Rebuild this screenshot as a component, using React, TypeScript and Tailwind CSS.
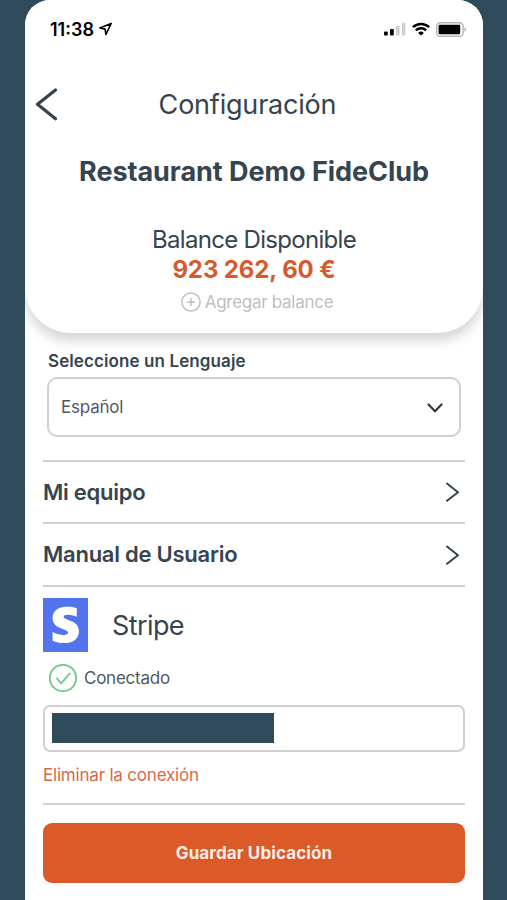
import React from 'react';

function StatusBar() {
  return (
    <div className="flex items-center justify-between h-[30px] pl-[25px] pr-[17px] text-black">
      <div className="flex items-center gap-[4px]">
        <span className="pt-px text-[18px] leading-none font-semibold">11:38</span>
        <svg width="15" height="14" viewBox="0 0 15 14" fill="none" stroke="currentColor" strokeWidth="1.6" strokeLinejoin="round">
          <path d="M13.2 1.4 1.8 6l5.3 1.1.8 5.4z" />
        </svg>
      </div>
      <div className="flex items-center">
        <svg width="22" height="14" viewBox="0 0 22 14">
          <rect x="0" y="9.5" width="3.8" height="4" rx="1" />
          <rect x="6" y="7" width="3.8" height="6.5" rx="1" />
          <rect x="12" y="3.8" width="3.6" height="9.7" rx="1" fill="#cfcfcf" />
          <rect x="17.8" y="0.7" width="3.6" height="12.8" rx="1" fill="#cfcfcf" />
        </svg>
        <svg className="ml-[6px]" width="18" height="14" viewBox="0 0 18 14" fill="none" stroke="currentColor" strokeWidth="2.5">
          <path d="M0.9 5.2a11.6 11.6 0 0 1 16.2 0" />
          <path d="M3.8 8.4a7.4 7.4 0 0 1 10.4 0" />
          <path d="M9 13.6 6.2 10.9a4 4 0 0 1 5.6 0z" fill="currentColor" stroke="none" />
        </svg>
        <svg className="ml-[6px]" width="30" height="15" viewBox="0 0 30 15">
          <rect x="0.7" y="0.7" width="26.4" height="13.6" rx="3.6" fill="none" stroke="#b4b4b4" strokeWidth="1.4" />
          <rect x="2.6" y="2.8" width="21.6" height="9.4" rx="1.2" />
          <path d="M28.6 5.4c1.5.6 1.5 3.8 0 4.4z" fill="#8d8d8d" />
        </svg>
      </div>
    </div>
  );
}

function Header() {
  return (
    <header className="flex flex-col h-[333px] pt-[14px] rounded-b-[46px] bg-white shadow-[0_8px_12px_rgba(0,0,0,0.16)] shrink-0">
      <StatusBar />
      <div className="grid grid-cols-[60px_1fr_60px] items-center h-[50px] mt-[36px]">
        <button className="pl-[10px]">
          <svg width="24" height="34" viewBox="0 0 24 34" fill="none" stroke="#36444f" strokeWidth="3.2" strokeLinecap="round" strokeLinejoin="round">
            <path d="M20.5 2 2.5 16.2 20.5 30.8" />
          </svg>
        </button>
        <h1 className="text-center text-[27px] tracking-[-0.2px] whitespace-nowrap -ml-[13px]">Configuración</h1>
      </div>
      <h2 className="mt-[22px] text-center text-[27px] leading-[40px] font-bold tracking-[-0.05px]">Restaurant Demo FideClub</h2>
      <p className="mt-[33px] text-center text-[24px] leading-[30px] tracking-[-0.7px]">Balance Disponible</p>
      <p className="mt-px text-center text-[24px] leading-[28px] font-bold tracking-[-0.1px] text-[#d55b2c]">923 262, 60 €</p>
      <button className="flex items-center justify-center gap-[4px] h-[24px] mt-[6px] pl-[6px] text-[#bfbfbf]">
        <svg width="20" height="20" viewBox="0 0 20 20" fill="none" stroke="currentColor" strokeWidth="1.5" strokeLinecap="round">
          <circle cx="10" cy="10" r="9.1" />
          <path d="M10 6.5v7M6.5 10h7" />
        </svg>
        <span className="pt-0.5 text-[17px] tracking-[-0.28px]">Agregar balance</span>
      </button>
    </header>
  );
}

function MenuRow({ label }: { label: string }) {
  return (
    <button className="flex items-center justify-between w-full h-[62.5px] pr-[5px] border-t-2 border-[#d0d0d0]">
      <span className="pt-px text-[22px] font-semibold tracking-[-0.25px]">{label}</span>
      <svg className="mt-px" width="15" height="20" viewBox="0 0 15 20" fill="none" stroke="#36444f" strokeWidth="2" strokeLinecap="round" strokeLinejoin="round">
        <path d="M2 1.5 13 10.2 2 18.8" />
      </svg>
    </button>
  );
}

export default function App() {
  return (
    <div className="h-[900px] pl-[25px] pr-[24px] bg-[#2f4a5b] overflow-hidden font-['Inter','Liberation_Sans',sans-serif] text-[#36444f]">
      <div className="flex flex-col h-full bg-white rounded-t-[25px] overflow-hidden">
        <Header />

        <main className="flex flex-col px-[18px] pt-[15px]">
          <div className="px-[4px]">
            <label className="block pl-px text-[17px] leading-[26px] font-semibold tracking-[0.1px]">Seleccione un Lenguaje</label>
            <div className="flex items-center justify-between h-[60px] mt-[3px] pt-px pl-[12px] pr-[16px] border-2 border-[#d0d0d0] rounded-[10px] text-[#50595f]">
              <span className="text-[17px] tracking-[-0.2px]">Español</span>
              <svg width="16" height="10" viewBox="0 0 16 10" fill="none" stroke="#303942" strokeWidth="2.2" strokeLinecap="round" strokeLinejoin="round">
                <path d="M1.5 1.5 8 8.3 14.5 1.5" />
              </svg>
            </div>
          </div>

          <div className="mt-[22.5px]">
            <MenuRow label="Mi equipo" />
            <MenuRow label="Manual de Usuario" />
          </div>

          <section className="border-t-2 border-[#d0d0d0] pt-[11.5px]">
            <div className="flex items-center gap-[24px]">
              <svg width="45" height="54" viewBox="0 0 45 54">
                <rect width="45" height="54" fill="#5474ef" />
                <path
                  d="M33.8 10.2v8.6c-3-1.3-6-2.1-9-2.1-2.6 0-4.2.7-4.2 2.1 0 1.6 2 2.2 5.4 3.4 6.6 2.3 9.9 5.2 9.9 11 0 7.6-5.5 11.9-14.5 11.9-4.4 0-8.6-.8-11.8-2.4v-8.8c3.6 1.9 7.6 3 11.2 3 2.8 0 4.3-.7 4.3-2.3s-1.7-2.4-5.6-3.7c-6.6-2.2-9.9-5.2-9.9-10.9 0-7 5.5-11.3 13.9-11.3 3.8 0 7.3.4 10.3 1.5z"
                  fill="#fff"
                />
              </svg>
              <span className="pt-0.5 text-[27px] tracking-[-0.6px]">Stripe</span>
            </div>
            <div className="flex items-center gap-[6px] h-[30px] mt-[11px] pl-[5px]">
              <svg width="30" height="30" viewBox="0 0 30 30" fill="none" stroke="#6cc985" strokeWidth="1.8" strokeLinecap="round" strokeLinejoin="round">
                <circle cx="15" cy="15" r="13.2" />
                <path d="m9 15.5 4.2 4.8 8.5-9.8" />
              </svg>
              <span className="pt-0.5 text-[17px] tracking-[-0.25px] text-[#50595f]">Conectado</span>
            </div>
            <div className="h-[47px] mt-[12px] p-[6px] pl-[7px] border-2 border-[#d0d0d0] rounded-[7px]">
              <div className="w-[222px] h-[30px] bg-[#2f4a5b]" />
            </div>
            <button className="block mt-[10px] text-[17px] leading-[26px] tracking-[-0.2px] text-[#d8694a]">Eliminar la conexión</button>
          </section>

          <div className="mt-[15px] pt-[18px] border-t-2 border-[#d0d0d0]">
            <button className="w-full h-[60px] pt-0.5 rounded-[9px] bg-[#dc5a28] text-[17px] font-bold tracking-[0.1px] text-[#fbeee6]">
              Guardar Ubicación
            </button>
          </div>
        </main>
      </div>
    </div>
  );
}
